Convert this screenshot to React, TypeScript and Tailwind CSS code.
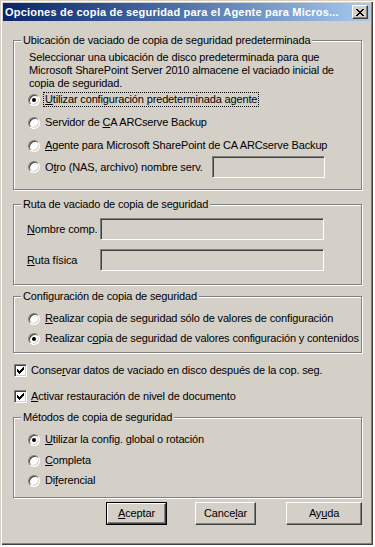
import React from "react";

const sunken =
  "border border-t-[#808080] border-l-[#808080] border-r-white border-b-white shadow-[inset_1px_1px_0_#404040,inset_-1px_-1px_0_#d4d0c8]";

function Radio({ checked = false }: { checked?: boolean }) {
  return (
    <span className={`mr-[5px] flex h-3 w-3 shrink-0 items-center justify-center rounded-full bg-white ${sunken}`}>
      {checked && <span className="h-1 w-1 rounded-full bg-black" />}
    </span>
  );
}

function Check() {
  return (
    <span className={`mr-[4px] flex h-[13px] w-[13px] shrink-0 items-center justify-center bg-white ${sunken}`}>
      <svg width="7" height="7" viewBox="0 0 7 7" shapeRendering="crispEdges">
        <path
          fill="#000"
          d="M6 0h1v1h-1zM5 1h2v1h-2zM0 2h1v1h-1zM4 2h3v1h-3zM0 3h2v1h-2zM3 3h3v1h-3zM0 4h5v1h-5zM1 5h3v1h-3zM2 6h1v1h-1z"
        />
      </svg>
    </span>
  );
}

function Group({ label, className, children }: { label: string; className: string; children: React.ReactNode }) {
  return (
    <div
      className={`ml-[10px] w-[349px] border border-[#808080] shadow-[1px_1px_0_#fff,inset_1px_1px_0_#fff] ${className}`}
    >
      <div className="-mt-[7px] ml-[7px] w-fit bg-[#d4d0c8] px-[2px] leading-[13px]">{label}</div>
      {children}
    </div>
  );
}

function Btn({ children, def = false, w }: { children: React.ReactNode; def?: boolean; w: string }) {
  const face = (
    <div className="flex h-full w-full items-center justify-center border border-t-white border-l-white border-r-[#404040] border-b-[#404040] shadow-[inset_-1px_-1px_0_#808080]">
      {children}
    </div>
  );
  return def ? (
    <div className={`h-[23px] border border-black ${w}`}>{face}</div>
  ) : (
    <div className={`h-[23px] ${w}`}>{face}</div>
  );
}

export default function App() {
  return (
    <div className="h-[547px] w-[375px] overflow-hidden bg-white font-['Liberation_Sans',Arial,sans-serif] text-[11px] leading-[13px] tracking-[-0.15px] text-black">
      <div className="h-[545px] w-[373px] bg-[#d4d0c8] p-[3px] shadow-[inset_1px_1px_0_#d4d0c8,inset_2px_2px_0_#fff,inset_-1px_-1px_0_#404040,inset_-2px_-2px_0_#808080]">
        {/* title bar */}
        <div className="flex h-[18px] items-center bg-linear-to-r from-[#0a246a] to-[#a6caf0] pl-[2px] pr-[2px]">
          <span className="flex-1 truncate whitespace-nowrap font-bold tracking-[0.2px] text-white">
            Opciones de copia de seguridad para el Agente para Micros...
          </span>
          <div className="flex h-[14px] w-4 items-center justify-center bg-[#d4d0c8] border border-t-white border-l-white border-r-[#404040] border-b-[#404040] shadow-[inset_-1px_-1px_0_#808080]">
            <svg width="8" height="7" viewBox="0 0 8 7" shapeRendering="crispEdges">
              <path
                fill="#000"
                d="M0 0h2v1h-2zM6 0h2v1h-2zM1 1h2v1h-2zM5 1h2v1h-2zM2 2h4v1h-4zM3 3h2v1h-2zM2 4h4v1h-4zM1 5h2v1h-2zM5 5h2v1h-2zM0 6h2v1h-2zM6 6h2v1h-2z"
              />
            </svg>
          </div>
        </div>

        {/* group 1 */}
        <Group label="Ubicación de vaciado de copia de seguridad predeterminada" className="mt-[19px] h-[150px]">
          <p className="mt-[4px] pl-[15px]">
            Seleccionar una ubicación de disco predeterminada para que
            <br />
            Microsoft SharePoint Server 2010 almacene el vaciado inicial de
            <br />
            copia de seguridad.
          </p>
          <div className="mt-[3px] flex items-center pl-[14px]">
            <Radio checked />
            <span className="-ml-[1px] px-[1px] outline-1 outline-dotted outline-black">
              <u>U</u>tilizar configuración predeterminada agente
            </span>
          </div>
          <div className="mt-[10px] flex items-center pl-[14px]">
            <Radio />
            <span>
              Servidor de <u>C</u>A ARCserve Backup
            </span>
          </div>
          <div className="mt-[10px] flex items-center pl-[14px]">
            <Radio />
            <span>
              <u>A</u>gente para Microsoft SharePoint de CA ARCserve Backup
            </span>
          </div>
          <div className="mt-[4px] flex h-[22px] items-center pl-[14px]">
            <Radio />
            <span className="w-[167px]">
              O<u>t</u>ro (NAS, archivo) nombre serv.
            </span>
            <div className={`h-[22px] w-[113px] ${sunken}`} />
          </div>
        </Group>

        {/* group 2 */}
        <Group label="Ruta de vaciado de copia de seguridad" className="mt-[14px] h-[81px]">
          <div className="mt-[7px] flex h-[22px] items-center pl-[13px]">
            <span className="w-[73px]">
              <u>N</u>ombre comp.
            </span>
            <div className={`h-[22px] w-[224px] ${sunken}`} />
          </div>
          <div className="mt-[9px] flex h-[22px] items-center pl-[13px]">
            <span className="w-[73px]">
              <u>R</u>uta física
            </span>
            <div className={`h-[22px] w-[224px] ${sunken}`} />
          </div>
        </Group>

        {/* group 3 */}
        <Group label="Configuración de copia de seguridad" className="mt-[11px] h-[57px]">
          <div className="mt-[9px] flex items-center pl-[14px]">
            <Radio />
            <span>
              <u>R</u>ealizar copia de seguridad sólo de valores de configuración
            </span>
          </div>
          <div className="mt-[7px] flex items-center pl-[14px]">
            <Radio checked />
            <span className="whitespace-nowrap">
              Realizar c<u>o</u>pia de seguridad de valores configuración y contenidos
            </span>
          </div>
        </Group>

        {/* checkboxes */}
        <div className="ml-[11px] mt-[11px] flex items-center">
          <Check />
          <span>
            Conse<u>r</u>var datos de vaciado en disco después de la cop. seg.
          </span>
        </div>
        <div className="ml-[11px] mt-[13px] flex items-center">
          <Check />
          <span>
            <u>A</u>ctivar restauración de nivel de documento
          </span>
        </div>

        {/* group 4 */}
        <Group label="Métodos de copia de seguridad" className="mt-[14px] h-[81px]">
          <div className="mt-[9px] flex items-center pl-[14px]">
            <Radio checked />
            <span>
              <u>U</u>tilizar la config. global o rotación
            </span>
          </div>
          <div className="mt-[8px] flex items-center pl-[14px]">
            <Radio />
            <span>
              <u>C</u>ompleta
            </span>
          </div>
          <div className="mt-[7px] flex items-center pl-[14px]">
            <Radio />
            <span>
              Di<u>f</u>erencial
            </span>
          </div>
        </Group>

        {/* buttons */}
        <div className="ml-[103px] mt-[4px] flex">
          <Btn def w="w-[61px]">
            <span>
              <u>A</u>ceptar
            </span>
          </Btn>
          <div className="ml-[28px]">
            <Btn w="w-[61px]">
              <span>
                Cance<u>l</u>ar
              </span>
            </Btn>
          </div>
          <div className="ml-[30px]">
            <Btn w="w-[76px]">
              <span>
                Ay<u>u</u>da
              </span>
            </Btn>
          </div>
        </div>
      </div>
    </div>
  );
}
